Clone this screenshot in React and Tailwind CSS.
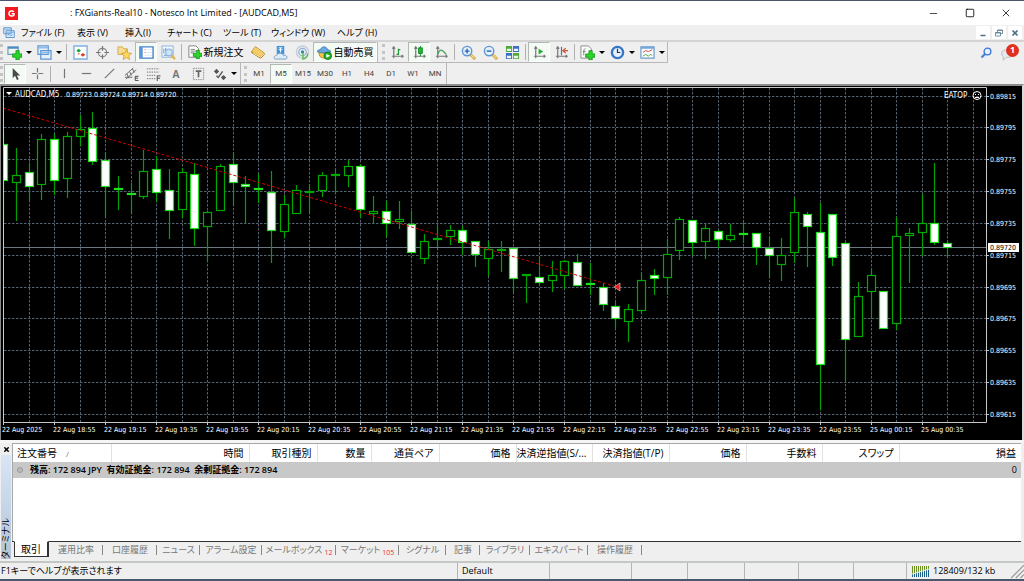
import React from 'react';
import { Minus, Square, X } from 'lucide-react';

// [high, body top, body bottom, low, filled]
const candles = [
  [133, 144, 181, 221, 1], [148, 175, 183, 221, 0], [163, 172, 187, 200, 1], [134, 139, 185, 200, 0],
  [134, 139, 181, 195, 1], [132, 136, 179, 198, 0], [115, 129, 137, 146, 0], [112, 128, 162, 165, 1],
  [152, 160, 187, 217, 1], [176, 188, 190, 210, 1], [183, 193, 195, 214, 1], [150, 171, 197, 199, 0],
  [156, 169, 193, 202, 1], [169, 190, 211, 239, 1], [168, 172, 210, 218, 0], [163, 174, 229, 246, 1],
  [211, 212, 227, 261, 0], [164, 166, 211, 211, 0], [153, 164, 183, 205, 1], [176, 184, 187, 224, 1],
  [174, 188, 190, 203, 1], [171, 192, 231, 263, 1], [195, 204, 232, 238, 0], [185, 190, 214, 214, 0],
  [184, 191, 192, 213, 0], [172, 175, 191, 197, 0], [169, 174, 176, 194, 0], [160, 166, 176, 187, 0],
  [164, 166, 210, 218, 1], [196, 211, 214, 224, 0], [201, 211, 224, 237, 1], [201, 219, 222, 229, 0],
  [211, 224, 253, 253, 1], [234, 241, 259, 264, 0], [226, 238, 239, 247, 0], [225, 230, 237, 245, 0],
  [226, 230, 243, 255, 1], [241, 241, 255, 267, 1], [241, 249, 259, 276, 0], [241, 249, 251, 272, 0],
  [248, 248, 279, 292, 1], [274, 274, 276, 303, 0], [256, 277, 283, 285, 1], [261, 275, 281, 292, 0],
  [260, 261, 276, 289, 0], [254, 262, 286, 286, 1], [263, 283, 285, 295, 1], [283, 287, 305, 311, 1],
  [302, 306, 319, 328, 1], [304, 309, 322, 342, 0], [272, 280, 311, 314, 0], [269, 275, 279, 295, 1],
  [239, 254, 278, 295, 0], [217, 219, 251, 260, 0], [220, 220, 243, 255, 1], [224, 228, 242, 259, 0],
  [230, 231, 240, 248, 1], [224, 235, 240, 242, 0], [222, 233, 235, 243, 1], [233, 233, 248, 265, 1],
  [237, 248, 256, 278, 1], [238, 255, 265, 281, 0], [198, 212, 253, 263, 0], [212, 214, 227, 267, 1],
  [203, 232, 365, 410, 1], [214, 214, 258, 266, 1], [242, 243, 340, 381, 1], [282, 296, 337, 337, 0],
  [269, 275, 292, 319, 0], [291, 291, 329, 329, 1], [217, 236, 324, 330, 0], [228, 233, 236, 283, 0],
  [194, 223, 233, 256, 0], [163, 223, 243, 245, 1], [241, 243, 248, 257, 1],
];

const prices = ['0.89815', '0.89795', '0.89775', '0.89755', '0.89735', '0.89715', '0.89695', '0.89675', '0.89655', '0.89635', '0.89615'];

const times = [
  '22 Aug 2025', '22 Aug 18:55', '22 Aug 19:15', '22 Aug 19:35', '22 Aug 19:55', '22 Aug 20:15', '22 Aug 20:35',
  '22 Aug 20:55', '22 Aug 21:15', '22 Aug 21:35', '22 Aug 21:55', '22 Aug 22:15', '22 Aug 22:35', '22 Aug 22:55',
  '22 Aug 23:15', '22 Aug 23:35', '22 Aug 23:55', '25 Aug 00:15', '25 Aug 00:35',
];

const menus = [
  ['ファイル (F)', 'w-14'],
  ['表示 (V)', 'w-12'],
  ['挿入(I)', 'w-[42px]'],
  ['チャート (C)', 'w-14'],
  ['ツール (T)', 'w-12'],
  ['ウィンドウ (W)', 'w-[66px]'],
  ['ヘルプ (H)', 'w-14'],
];

const columns = [
  ['注文番号', 'w-[98px]'],
  ['時間', 'w-[138px]'],
  ['取引種別', 'w-[68px]'],
  ['数量', 'w-[54px]'],
  ['通貨ペア', 'w-[68px]'],
  ['価格', 'w-[77px]'],
  ['決済逆指値(S/...', 'w-[76px]'],
  ['決済指値(T/P)', 'w-[77px]'],
  ['価格', 'w-[77px]'],
  ['手数料', 'w-[76px]'],
  ['スワップ', 'w-[77px]'],
  ['損益', ''],
];

const tabs = [
  ['運用比率', 'w-[54px]'],
  ['口座履歴', 'w-[54px]'],
  ['ニュース', 'w-[43px]'],
  ['アラーム設定', 'w-[62px]'],
  ['メールボックス', 'w-[74px]', '12'],
  ['マーケット', 'w-[63px]', '105'],
  ['シグナル', 'w-[47px]'],
  ['記事', 'w-[34px]'],
  ['ライブラリ', 'w-[50px]'],
  ['エキスパート', 'w-[58px]'],
  ['操作履歴', 'w-[54px]'],
];

const timeframes = ['M1', 'M5', 'M15', 'M30', 'H1', 'H4', 'D1', 'W1', 'MN'];

const Icon = ({ children, size = 'w-[15px] h-[15px]' }) => (
  <svg viewBox="0 0 16 16" className={`${size} shrink-0`} fill="none" aria-hidden="true">
    {children}
  </svg>
);

const Plus = () => (
  <path d="M9.500 6h3.500v3.500h3V13h-3v3H9.500v-3H6V9.500h3.500z" fill="#2bd52b" stroke="#0b8d12" strokeWidth=".8" />
);

const Axes = () => (
  <path d="M4 2v12M2 12h12M2.500 4 4 2l1.500 2M12.500 10.500 14 12l-1.500 1.500" stroke="#777" strokeWidth="1.300" />
);

const Magnifier = ({ plus }) => (
  <Icon>
    <path d="m10 10 5 5" stroke="#c99a2c" strokeWidth="3" />
    <path d="m10.500 10.500 4 4" stroke="#f8da7c" strokeWidth="1.500" />
    <circle cx="6.500" cy="6.500" r="5" fill="#e3f0fc" stroke="#5c95d4" strokeWidth="1.500" />
    <path d={plus ? 'M4 6.500h5M6.500 4v5' : 'M4 6.500h5'} stroke="#2d62ad" strokeWidth="1.500" />
  </Icon>
);

const Tool = ({ label, pressed, menu, children, width = 'w-[22px]' }) => (
  <button
    aria-label={label}
    className={`${width} h-[20px] shrink-0 flex items-center justify-center gap-1 border
    ${pressed ? 'bg-[#f4faf4] border-[#b4b8b4] border-r-white border-b-white' : 'border-transparent'}`}
  >
    {children}
    {menu && <span className="border-x-[3px] border-x-transparent border-t-[3px] border-t-black" />}
  </button>
);

const Separator = () => <span className="w-px h-4 mx-[2px] shrink-0 bg-[#b0b0b0]" />;

const Grip = () => <span className="h-4 mr-px shrink-0 border-l-[3px] border-dotted border-[#c4c4c4]" />;

const TitleBar = () => (
  <header className="h-[25px] shrink-0 flex items-center bg-white border-t border-[#4a5568]">
    <svg viewBox="0 0 14 14" className="w-[13px] h-[13px] ml-[5px]" aria-hidden="true">
      <path d="M0 0h14v14H0z" fill="#f31a1f" />
      <path d="M9.500 5.200C8.500 3.800 4.300 3.700 4.300 7s4.200 3.300 5.400 1.700V7.200H7.200" fill="none" stroke="#fff" strokeWidth="1.500" />
    </svg>
    <h1 className="ml-[52px] grow text-[9px] leading-4 text-black">: FXGiants-Real10 - Notesco Int Limited - [AUDCAD,M5]</h1>
    <button aria-label="Minimize" className="w-[37px] flex justify-center"><Minus className="w-[11px] h-[11px]" strokeWidth={1.5} /></button>
    <button aria-label="Maximize" className="w-[35px] flex justify-center"><Square className="w-[10px] h-[10px]" strokeWidth={2} /></button>
    <button aria-label="Close" className="w-[37px] flex justify-center"><X className="w-3 h-3" strokeWidth={1.5} /></button>
  </header>
);

const MenuBar = () => (
  <nav className="h-[15px] shrink-0 flex items-center">
    <span className="w-[21px] pl-[3px]">
      <Icon size="w-3 h-3">
        <path d="M1 1h10v8H1zM4 5h11v9H4z" fill="#e8f2fc" stroke="#5c93cf" strokeWidth="1.300" />
        <path d="M1 3h10M4 7h11" stroke="#7fb0e4" strokeWidth="1.500" />
        <path d="m6 11 2-1 2 2 3-2" stroke="#4785c8" />
      </Icon>
    </span>
    {menus.map(([name, width]) => (
      <button key={name} className={`${width} shrink-0 text-left whitespace-nowrap text-[9px] leading-3`}>{name}</button>
    ))}
    <div className="ml-auto flex gap-[2px] pr-[2px] text-[#4d7184]">
      <button aria-label="Minimize chart" className="w-[14px] h-[13px] bg-white flex items-center justify-center">
        <Icon size="w-2 h-2"><path d="M3 13h10" stroke="currentColor" strokeWidth="3" /></Icon>
      </button>
      <button aria-label="Restore chart" className="w-[14px] h-[13px] bg-white flex items-center justify-center">
        <Icon size="w-2 h-2"><path d="M5 6V2h10v7h-4M1 7h10v7H1zM1 8h10M5 3h10" stroke="currentColor" strokeWidth="1.500" /></Icon>
      </button>
      <button aria-label="Close chart" className="w-[14px] h-[13px] bg-white flex items-center justify-center">
        <Icon size="w-2 h-2"><path d="m3 3 10 10M13 3 3 13" stroke="currentColor" strokeWidth="3.500" /></Icon>
      </button>
    </div>
  </nav>
);

const StandardBar = () => (
  <div className="flex items-center">
    <div className="h-[21px] flex items-center border-b border-r border-[#b8b8b8]">
      <Grip />
      <Tool label="New chart" menu width="w-[30px]">
        <Icon>
          <path d="M1 2h11v8H1z" fill="#eef6ee" stroke="#6a9fc4" strokeWidth="1.300" />
          <path d="M1 3h11" stroke="#4c8ac6" strokeWidth="2" />
          <Plus />
        </Icon>
      </Tool>
      <Tool label="Profiles" menu width="w-[30px]">
        <Icon>
          <path d="M1 1h11v9H1zM4 6h11v9H4z" fill="#e6f1fc" stroke="#5e97d3" strokeWidth="1.300" />
          <path d="M1 3h11M4 8h11" stroke="#8fbbe8" strokeWidth="1.500" />
        </Icon>
      </Tool>
      <Separator />
      <Tool label="Market watch">
        <Icon>
          <path d="M1 1h14v14H1z" fill="#fff" stroke="#7fb2e2" strokeWidth="1.500" />
          <path d="m3.500 6 2.500-2 2.500 2L6 8z" fill="#18a52c" />
          <path d="m8 10.500 2.500-2 2.500 2-2.500 2z" fill="#e13a24" />
          <path d="M5 9.500h2" stroke="#e13a24" />
        </Icon>
      </Tool>
      <Tool label="Data window">
        <Icon>
          <circle cx="8" cy="8" r="4.500" stroke="#8a8a8a" strokeWidth="1.300" />
          <path d="M8 1v5M8 10v5M1 8h5M10 8h5" stroke="#777" strokeWidth="1.300" />
        </Icon>
      </Tool>
      <Tool label="Navigator">
        <Icon>
          <path d="M1 2h5l1 2h4v6H1z" fill="#f6dc94" stroke="#d3aa4c" />
          <path d="m10 5 1.600 3.500 3.900.4-3 2.500.9 4-3.400-2-3.400 2 .9-4-3-2.500 3.900-.4z" fill="#ffd75a" stroke="#cf9a2c" strokeWidth=".8" />
        </Icon>
      </Tool>
      <Tool label="Terminal" pressed>
        <Icon>
          <path d="M1 2h14v12H1z" fill="#fff" stroke="#4a84c8" strokeWidth="1.500" />
          <path d="M1 2h3v12H1z" fill="#5d96d6" />
          <path d="M6 5h1M6 8h1" stroke="#d55" />
          <path d="M8 5h6M8 8h6M6 11h8" stroke="#dfe9f3" />
        </Icon>
      </Tool>
      <Tool label="Strategy tester">
        <Icon>
          <path d="M1 1h12v12H1z" fill="#f3f8fd" stroke="#8ab2dc" />
          <path d="M3 9V4M5 7V3M3 11h6" stroke="#6a92bd" />
          <path d="m11 11 4 4" stroke="#e3b64c" strokeWidth="2.500" />
          <circle cx="8.500" cy="8" r="3.500" fill="#cfe4f8" stroke="#8fb6df" strokeWidth="1.300" />
        </Icon>
      </Tool>
      <Separator />
      <Tool label="新規注文" width="w-[63px]">
        <Icon size="w-[14px] h-[14px]">
          <path d="M1 1h8l3 3v10H1z" fill="#fff" stroke="#777" />
          <path d="M3 5h5M3 7h6M3 9h4" stroke="#777" />
          <Plus />
        </Icon>
        <span className="-ml-[2px] text-[10px] leading-3 whitespace-nowrap">新規注文</span>
      </Tool>
      <Tool label="MetaEditor">
        <Icon size="w-[14px] h-[14px]">
          <path d="m1 7 4-5 10 7v2l-4 4-10-6z" fill="#d8a232" stroke="#9d6c12" />
          <path d="m1 7 4-5 10 7-4 4z" fill="#f5cd68" />
          <path d="m2 9 9 5 4-4" stroke="#fff3c8" />
        </Icon>
      </Tool>
      <Tool label="Virtual hosting">
        <Icon>
          <path d="M4 1h8v9H4z" fill="#3f92dc" />
          <path d="M6 3h4M6 5h4M8 3v5" stroke="#fff" />
          <path d="M2 15c-2-2 0-4 2-4 1-3 6-3 7 0 4-1 5 3 3 4z" fill="#dcebf8" stroke="#7d9fc4" />
        </Icon>
      </Tool>
      <Tool label="Signals">
        <Icon>
          <circle cx="8" cy="7.500" r="6.500" stroke="#c3ced8" strokeWidth="1.500" />
          <circle cx="8" cy="7.500" r="4" stroke="#8fb4d0" strokeWidth="1.300" />
          <circle cx="8" cy="7.500" r="1.800" fill="#3a7fc1" />
          <path d="M8.500 8v7c4-1 5-3 5-6" stroke="#5abf4c" strokeWidth="1.500" />
        </Icon>
      </Tool>
      <Tool label="自動売買" pressed width="w-16">
        <Icon>
          <path d="M2 8c0 4 2 6 6 6s5-3 5-6z" fill="#f4c64b" stroke="#b88a20" />
          <path d="M0 7c1-2 3-2 4-2 0-4 7-4 7 0 2 0 3 1 4 2-4 2-11 2-15 0z" fill="#6aa9e0" stroke="#3e7ab5" />
          <circle cx="11.500" cy="11.500" r="4" fill="#27b32b" stroke="#0e7a14" />
          <path d="m10 9.500 4 2-4 2z" fill="#fff" />
        </Icon>
        <span className="-ml-[2px] text-[10px] leading-3 whitespace-nowrap">自動売買</span>
      </Tool>
    </div>
    <div className="h-[21px] pl-1 flex items-center gap-0 border-b border-r border-[#b8b8b8]">
      <Grip />
      <Tool label="Bar chart">
        <Icon><Axes /><path d="M7 10h2V5h2M9 4v6" stroke="#1d9a32" strokeWidth="1.300" /></Icon>
      </Tool>
      <Tool label="Candlesticks" pressed>
        <Icon><Axes /><path d="M9 1v11" stroke="#138b25" /><path d="M7 3h4v6H7z" fill="#25b93a" stroke="#138b25" /></Icon>
      </Tool>
      <Tool label="Line chart">
        <Icon><Axes /><path d="M4 10c2-6 4-6 9 0" stroke="#44a653" strokeWidth="1.500" /></Icon>
      </Tool>
      <Separator />
      <Tool label="Zoom in"><Magnifier plus /></Tool>
      <Tool label="Zoom out"><Magnifier /></Tool>
      <Tool label="Tile windows">
        <Icon>
          <path d="M1 1h6.500v6.500H1zM8.500 8.500H15V15H8.500z" fill="#52a83a" />
          <path d="M8.500 1H15v6.500H8.500zM1 8.500h6.500V15H1z" fill="#3a6fc4" />
          <path d="M2 4h4.500v2.500H2zM9.500 4H14v2.500H9.500zM2 11.500h4.500V14H2zM9.500 11.500H14V14H9.500z" fill="#eef6f0" />
        </Icon>
      </Tool>
      <Separator />
      <Tool label="Auto scroll" pressed>
        <Icon><Axes /><path d="m7 4 5 3-5 3z" fill="#24ad36" /></Icon>
      </Tool>
      <Tool label="Chart shift">
        <Icon><Axes /><path d="M8 2v9" stroke="#4677a8" strokeWidth="1.300" /><path d="M15 6h-4M12.500 3.500 9.500 6l3 2.500" stroke="#c9502f" strokeWidth="1.300" /></Icon>
      </Tool>
      <Separator />
      <Tool label="Indicators" menu width="w-[30px]">
        <Icon>
          <path d="M1 1h8l3 3v10H1z" fill="#fff" stroke="#888" />
          <path d="M6 4c-2 0-2 1-2 7M3 7h3" stroke="#777" />
          <Plus />
        </Icon>
      </Tool>
      <Tool label="Periods" menu width="w-[30px]">
        <Icon>
          <circle cx="8" cy="8" r="6" fill="#e4f1ff" stroke="#3576c8" strokeWidth="2.500" />
          <path d="M8 4v4h3" stroke="#333" strokeWidth="1.300" />
        </Icon>
      </Tool>
      <Tool label="Templates" menu width="w-[30px]">
        <Icon>
          <path d="M1 2h14v12H1z" fill="#fff" stroke="#6a9ccc" strokeWidth="1.300" />
          <path d="M1 3h14" stroke="#73a6d9" strokeWidth="2" />
          <path d="m3 8 3-2 3 1 4-2" stroke="#c44" />
          <path d="m3 12 3-2 3 2 2-2 2 1" stroke="#4a4" />
        </Icon>
      </Tool>
    </div>
    <div className="ml-auto flex items-center gap-[9px] pr-[5px]">
      <button aria-label="Search">
        <Icon size="w-3 h-3">
          <path d="m7 9-5 5" stroke="#4b82d8" strokeWidth="3" />
          <circle cx="10" cy="6" r="4.500" fill="#e6f0fc" stroke="#3b76d2" strokeWidth="1.800" />
        </Icon>
      </button>
      <button aria-label="Notifications" className="relative w-[18px] h-4">
        <Icon size="w-3 h-3 mt-1"><path d="M1 5c0-5 14-5 14 1s-6 5-8 5l-4 4v-5C1 9 1 7 1 5z" fill="#e6eaef" stroke="#a6adb5" /></Icon>
        <span className="absolute -top-px right-0 w-[13px] h-[13px] rounded-full bg-[#e03020] text-white text-[9px] leading-3 font-bold text-center">1</span>
      </button>
    </div>
  </div>
);

const LineBar = () => (
  <div className="flex items-center">
    <div className="h-[21px] flex items-center gap-0 border-r border-[#b8b8b8]">
      <Grip />
      <Tool label="Cursor" pressed>
        <Icon><path d="M5 2v11l2.500-2.500L9.500 15l2-1-2-4H13z" fill="#4a4a4a" /></Icon>
      </Tool>
      <Tool label="Crosshair">
        <Icon><path d="M8 2v5M8 9v5M2 8h5M9 8h5" stroke="#777" strokeWidth="1.300" /></Icon>
      </Tool>
      <Separator />
      <Tool label="Vertical line"><Icon><path d="M8 3v10" stroke="#777" strokeWidth="1.300" /></Icon></Tool>
      <Tool label="Horizontal line" width="w-[23px]"><Icon><path d="M3 8h10" stroke="#777" strokeWidth="1.300" /></Icon></Tool>
      <Tool label="Trendline"><Icon><path d="M3 13 13 3" stroke="#777" strokeWidth="1.300" /></Icon></Tool>
      <Tool label="Equidistant channel">
        <Icon>
          <path d="m1 10 9-8M2 14 13 4M3 8l2 5M6 6l2 4M9 3l2 4M1 12h8" stroke="#666" />
          <path d="M15.500 11H12v4.500h3.500M12 13h3" stroke="#444" />
        </Icon>
      </Tool>
      <Tool label="Fibonacci retracement" width="w-[23px]">
        <Icon>
          <path d="M1 3h13M1 6.500h13M1 10h10M1 13.500h9" stroke="#777" strokeDasharray="1.500 1" />
          <path d="M15.500 10.500H12V16M12 13h3" stroke="#444" />
        </Icon>
      </Tool>
      <Tool label="Text"><span className="text-[10px] leading-3 font-bold text-[#777]">A</span></Tool>
      <Tool label="Text label" width="w-[23px]">
        <Icon>
          <path d="M2.500 2.500h11v12h-11z" stroke="#888" strokeDasharray="1.500 1" />
          <path d="M5 5.500h6M8 5.500V12" stroke="#666" strokeWidth="1.800" />
        </Icon>
      </Tool>
      <Tool label="Arrows" menu width="w-[30px]">
        <Icon size="w-[14px] h-[14px]">
          <path d="m4 2 3 3-3 3-3-3zM12 9l3 3-3 3-3-3z" fill="#555" />
          <path d="m4 10 2 2 5-7" stroke="#555" strokeWidth="1.500" />
        </Icon>
      </Tool>
    </div>
    <div className="h-[21px] pl-[3px] flex items-center border-r border-[#b8b8b8]">
      <Grip />
      {timeframes.map((tf) => (
        <Tool key={tf} label={tf} pressed={tf === 'M5'}>
          <span className="font-['Roboto',sans-serif] text-[8px] leading-3 text-[#444]">{tf}</span>
        </Tool>
      ))}
    </div>
  </div>
);

const Candle = ({ x, data }) => {
  const [high, top, bottom, low, filled] = data;
  return (
    <g stroke="#00a000">
      <path d={`M${x} ${high}V${top}M${x} ${bottom}V${low}`} strokeWidth="1.200" />
      <rect
        x={x - 4}
        y={top + 0.5}
        width="8"
        height={Math.max(bottom - top - 1, 1)}
        fill={filled ? '#fff' : '#000'}
        stroke={filled ? '#20e020' : '#00a800'}
        strokeWidth="1.200"
      />
    </g>
  );
};

const Chart = () => (
  <main className="bg-black border-t-2 border-t-[#8c8c8c] border-r-2 border-r-[#d8dcd8]">
    <svg viewBox="0 86 1022 354" className="block w-full h-auto font-['DejaVu_Sans_Condensed','DejaVu_Sans',sans-serif]" role="img" aria-label="AUDCAD,M5">
      <path d="M.5 86v354" stroke="#888" />
      <g stroke="#55626f" strokeDasharray="2.500 1.500">
        {prices.map((p, i) => (
          <path key={p} d={`M4 ${Math.round(95.500 + i * 31.85)}.500H986`} />
        ))}
        {Array.from({ length: 38 }, (_, i) => (
          <path key={i} d={`M${Math.round(28.5 + i * 25.52)}.500 88V422`} />
        ))}
      </g>
      <path d="M4 247.500H986" stroke="#6b7783" />
      <clipPath id="plot"><path d="M3 88h983v334H3z" /></clipPath>
      <g clipPath="url(#plot)">
        {candles.map((c, i) => (
          <Candle key={i} x={Math.round(3 + i * 12.76) + 0.5} data={c} />
        ))}
        <path d="M3 108 614 286" stroke="#d00000" strokeDasharray="3 2" />
      </g>
      <path d="m614 287 6-4v8z" fill="#e02020" stroke="#f3b0b0" strokeWidth=".7" />
      <path d="M3.500 423V87.500H986.500V422.500H3" fill="none" stroke="#c8c8c8" />
      <g fill="#fff" fontSize="7">
        <path d="M6 92h6l-3 3z" />
        <text x="15" y="97" fontSize="8">AUDCAD,M5</text>
        <text x="66" y="97">0.89723 0.89724 0.89714 0.89720</text>
        <text x="944" y="98" fontSize="8">EATOP</text>
        {prices.map((p, i) => (
          <g key={p}>
            <path d={`M987 ${Math.round(95.500 + i * 31.85)}.500h2`} stroke="#c8c8c8" />
            <text x="990" y={Math.round(98.500 + i * 31.85)}>{p}</text>
          </g>
        ))}
        {times.map((t, i) => (
          <g key={t}>
            <path d={`M${Math.round(3 + i * 51.04)}.500 423v2`} stroke="#c8c8c8" />
            <text x={Math.round(2 + i * 51.04)} y="432">{t}</text>
          </g>
        ))}
      </g>
      <g fill="none" stroke="#fff">
        <circle cx="977" cy="95.500" r="4" />
        <path d="M975 94.500h1M978 94.500h1M975 97.500h4" />
      </g>
      <rect x="988" y="243" width="31" height="9" fill="#fff" />
      <text x="990" y="250" fontSize="7" fill="#000">0.89720</text>
    </svg>
  </main>
);

const Terminal = () => (
  <section className="flex grow border-t-[3px] border-[#f3f6f3]">
    <aside className="w-3 shrink-0 flex flex-col items-center pb-[2px]">
      <button aria-label="Close terminal" className="h-3 flex items-center">
        <X className="w-[7px] h-[7px]" strokeWidth={5} />
      </button>
      <div className="grow w-[10px] flex justify-start bg-linear-to-b from-[#d8e6f6] to-[#b3c4d8]">
        <span className="[writing-mode:vertical-rl] [text-orientation:sideways] rotate-180 text-[9px] leading-[10px] whitespace-nowrap">ターミナル</span>
      </div>
    </aside>
    <div className="grow min-w-0 mr-[3px] flex flex-col">
      <div className="grow bg-white border-t border-l border-[#a8a8a8] pb-[62px]">
        <table className="w-full table-fixed border-collapse text-[10px] leading-4">
          <thead>
            <tr className="h-[18px] leading-[14px]">
              {columns.map(([name, width], i) => (
                <th
                  key={i}
                  className={`${width} p-0 font-normal whitespace-nowrap ${i === 0 ? 'text-left pl-1' : 'text-right pr-[5px]'} ${i < 11 ? 'border-r border-[#e2e2e2]' : ''}`}
                >
                  {name}
                  {i === 0 && <span className="ml-[9px] text-[8px] text-gray-500">/</span>}
                </th>
              ))}
            </tr>
          </thead>
          <tbody>
            <tr className="h-4 bg-[#c8c8c8] text-[9px] font-semibold">
              <td colSpan={11} className="p-0 pl-1 whitespace-pre">
                <span className="inline-block w-[6px] h-[6px] mr-[7px] rounded-full border border-[#999] bg-[#bbb]" />
                残高: 172 894 JPY  有効証拠金: 172 894  余剰証拠金: 172 894
              </td>
              <td className="p-0 pr-[4px] text-right font-normal">0</td>
            </tr>
          </tbody>
        </table>
      </div>
      <div className="h-5 shrink-0 flex items-start border-t border-[#333] pl-[2px]">
        <button className="w-[35px] h-4 -mt-px bg-white border border-t-white border-[#333] border-r-2 text-[10px] leading-3">取引</button>
        {tabs.map(([name, width, count]) => (
          <button key={name} className={`${width} h-[15px] flex items-center justify-center whitespace-nowrap text-[9px] leading-3 text-[#777] relative`}>
            {name}
            {count && <span className="pt-[6px] pl-[2px] text-[7px] leading-3 text-[#f03030]">{count}</span>}
            <span className="absolute right-0 top-[3px] w-px h-[10px] bg-[#888]" />
          </button>
        ))}
      </div>
    </div>
  </section>
);

const StatusBar = () => (
  <footer className="h-5 shrink-0 flex items-center border-t-2 border-t-[#c4c8c4] border-b-2 border-b-[#4a5a6e] text-[9px] leading-4 *:h-4 *:whitespace-nowrap">
    <span className="grow pl-[1px]">F1キーでヘルプが表示されます</span>
    <span className="w-[92px] pl-1 border-l border-[#b4b4b4]">Default</span>
    <span className="w-[82px] border-l border-[#b4b4b4]" />
    <span className="w-[56px] border-l border-[#b4b4b4]" />
    <span className="w-[57px] border-l border-[#b4b4b4]" />
    <span className="w-[54px] border-l border-[#b4b4b4]" />
    <span className="w-[55px] border-l border-[#b4b4b4]" />
    <span className="w-[53px] border-l border-[#b4b4b4]" />
    <span className="w-[104px] pl-1 flex items-center gap-[3px] border-l border-[#b4b4b4]">
      <svg viewBox="0 0 19 11" className="w-[19px] h-[11px]" aria-hidden="true">
        {[0, 1, 2, 3, 4, 5, 6, 7, 8].map((n) => (
          <g key={n}>
            <path d={`M${n * 2 + 1}.500 0V${7.5 - n * 0.6}`} stroke="#6b8e23" />
            <path d={`M${n * 2 + 1}.500 11V${8.5 - n * 0.6}`} stroke="#1c5f86" />
          </g>
        ))}
      </svg>
      128409/132 kb
    </span>
    <svg viewBox="0 0 12 12" className="w-[14px] shrink-0" aria-hidden="true">
      <path d="M12 1 1 12M12 5l-7 7M12 9l-3 3" stroke="#999" />
    </svg>
  </footer>
);

export default function App() {
  return (
    <div className="min-h-screen flex flex-col bg-[#efefef] text-black font-['Open_Sans','Noto_Sans_CJK_JP',sans-serif] [font-feature-settings:'palt']">
      <TitleBar />
      <MenuBar />
      <div className="h-11 shrink-0 border-t-2 border-[#d4d4d4]">
        <StandardBar />
        <LineBar />
      </div>
      <Chart />
      <Terminal />
      <StatusBar />
    </div>
  );
}
